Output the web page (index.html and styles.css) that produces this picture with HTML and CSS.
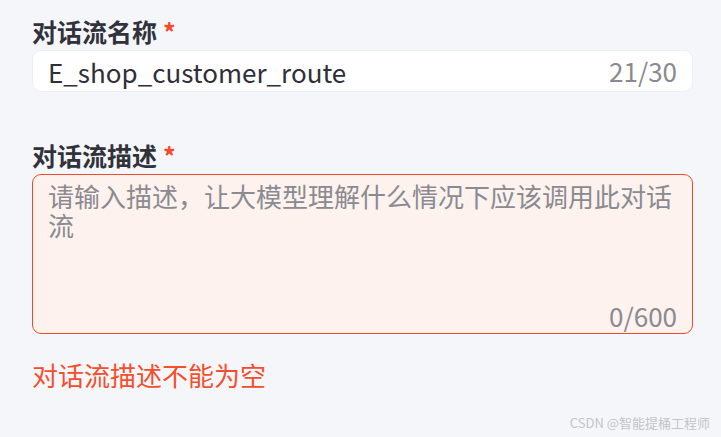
FILE: index.html
```html
<!DOCTYPE html>
<html lang="zh-CN">
<head>
    <meta charset="UTF-8">
    <title>对话流设置</title>
    <link rel="stylesheet" href="styles.css">
</head>
<body>
    <div class="flow-form">
        <div class="form-item">
            <label class="form-label" for="flow-name">对话流名称<span class="required">*</span></label>
            <div class="name-input">
                <input type="text" id="flow-name" value="E_shop_customer_route" maxlength="30">
                <span class="counter">21/30</span>
            </div>
        </div>

        <div class="form-item desc-item">
            <label class="form-label" for="flow-desc">对话流描述<span class="required">*</span></label>
            <div class="desc-box is-error">
                <textarea id="flow-desc" maxlength="600" placeholder="请输入描述，让大模型理解什么情况下应该调用此对话流"></textarea>
                <span class="counter desc-counter">0/600</span>
            </div>
            <div class="error-msg">对话流描述不能为空</div>
        </div>
    </div>

    <div class="watermark">CSDN @智能提桶工程师</div>
</body>
</html>
```

FILE: styles.css
```css
body {
    font-family: "Noto Sans CJK SC", "Noto Sans", sans-serif;
    background-color: #f5f6fa;
    color: #2b2b33;
    margin: 0;
    padding: 16px 28px 0 32px;
}

.form-label {
    display: block;
    font-size: 25px;
    font-weight: bold;
    line-height: 30px;
    color: #32323b;
    margin-bottom: 4px;
}

.required {
    color: #f54a2a;
    margin-left: 6px;
}

.name-input {
    display: flex;
    align-items: center;
    height: 42px;
    box-sizing: border-box;
    padding: 0 15px 0 15px;
    background-color: white;
    border: 1px solid #eceef3;
    border-radius: 9px;
}

.name-input input {
    flex: 1;
    min-width: 0;
    border: none;
    outline: none;
    background: transparent;
    padding: 0;
    font-family: inherit;
    font-size: 26px;
    color: #2f2f38;
}

.counter {
    font-size: 26px;
    line-height: 26px;
    color: #8a8a90;
}

.desc-item {
    margin-top: 48px;
}

.desc-box {
    display: flex;
    flex-direction: column;
    height: 160px;
    box-sizing: border-box;
    padding: 6px 15px 4px 15px;
    background-color: #fdf2ee;
    border: 1px solid #f04a2a;
    border-radius: 9px;
}

.desc-box textarea {
    flex: 1;
    border: none;
    outline: none;
    resize: none;
    background: transparent;
    padding: 0;
    font-family: inherit;
    font-size: 26px;
    line-height: 29px;
    color: #2f2f38;
}

.desc-box textarea::placeholder {
    color: #8a8a90;
}

.desc-counter {
    align-self: flex-end;
}

.error-msg {
    margin-top: 26px;
    font-size: 26px;
    line-height: 30px;
    color: #f44e2c;
}

.watermark {
    position: absolute;
    right: 11px;
    bottom: 5px;
    font-size: 13px;
    color: #c4c4c8;
}
```
